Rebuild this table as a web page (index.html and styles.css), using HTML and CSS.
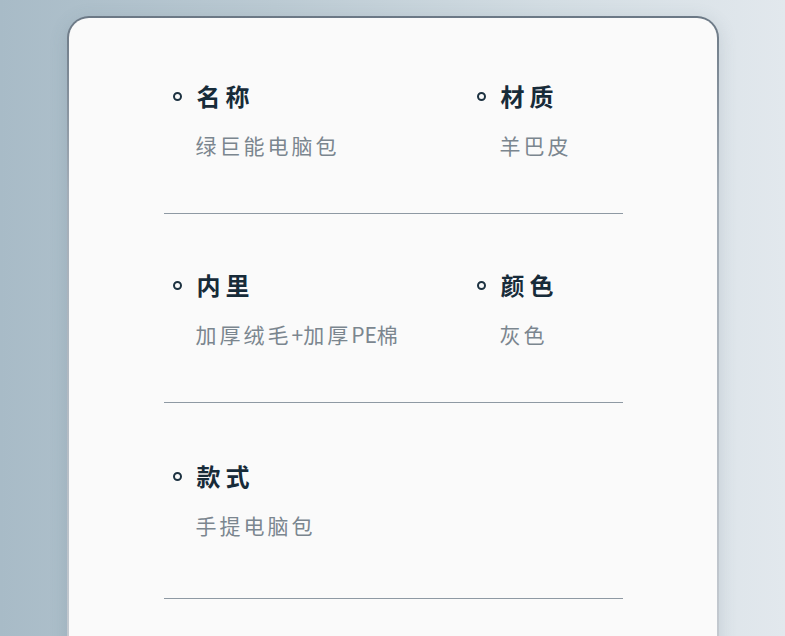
FILE: index.html
```html
<!DOCTYPE html>
<html lang="zh">
<head>
<meta charset="utf-8">
<title>商品参数</title>
<link rel="stylesheet" href="styles.css">
</head>
<body>
<main class="page">
  <section class="card">
    <div class="section section-first">
      <div class="item">
        <div class="title"><span class="dot"></span><span class="label">名称</span></div>
        <div class="value">绿巨能电脑包</div>
      </div>
      <div class="item">
        <div class="title"><span class="dot"></span><span class="label">材质</span></div>
        <div class="value">羊巴皮</div>
      </div>
    </div>
    <div class="section">
      <div class="item">
        <div class="title"><span class="dot"></span><span class="label">内里</span></div>
        <div class="value">加厚绒毛<span class="latin">+</span>加厚<span class="latin">PE</span>棉</div>
      </div>
      <div class="item">
        <div class="title"><span class="dot"></span><span class="label">颜色</span></div>
        <div class="value">灰色</div>
      </div>
    </div>
    <div class="section section-last">
      <div class="item">
        <div class="title"><span class="dot"></span><span class="label">款式</span></div>
        <div class="value">手提电脑包</div>
      </div>
    </div>
  </section>
</main>
</body>
</html>
```

FILE: styles.css
```css
html, body {
  margin: 0;
  padding: 0;
  height: 100%;
}

body {
  font-family: "Noto Sans CJK SC", "Noto Sans", sans-serif;
  background: linear-gradient(90deg, #a8bbc7 0%, #bbcad3 35%, #d3dde3 70%, #e2e8ed 100%);
  overflow: hidden;
}

.page {
  display: flex;
  justify-content: center;
  padding-top: 16px;
}

.card {
  width: 652px;
  box-sizing: border-box;
  min-height: 700px;
  border: 2px solid transparent;
  border-bottom: 0;
  border-radius: 22px 22px 0 0;
  background:
    linear-gradient(#fafafa, #fafafa) padding-box,
    linear-gradient(180deg, #6b7885 0%, #a3adb7 25%, #c9ced4 100%) border-box;
  box-shadow: 0 4px 18px rgba(80, 100, 115, 0.18);
  padding: 6px 94px 0 95px;
}

.section {
  display: grid;
  grid-template-columns: 304px 1fr;
  padding: 56px 0 53px 9px;
  border-bottom: 1px solid #8e99a3;
}

.section-first {
  padding-top: 57px;
}

.section-last {
  padding-top: 58px;
  padding-bottom: 58px;
}

.item {
  display: flex;
  flex-direction: column;
}

.title {
  display: flex;
  align-items: center;
  height: 30px;
}

.dot {
  width: 9px;
  height: 9px;
  box-sizing: border-box;
  border: 2px solid #1d3241;
  border-radius: 50%;
  margin-right: 15px;
  flex: none;
}

.label {
  font-size: 24px;
  font-weight: 700;
  letter-spacing: 5px;
  color: #172b39;
  line-height: 30px;
}

.value {
  margin-top: 19px;
  padding-left: 23px;
  font-size: 21px;
  line-height: 30px;
  letter-spacing: 3px;
  color: #7b868f;
}

.latin {
  letter-spacing: 0;
}
```
